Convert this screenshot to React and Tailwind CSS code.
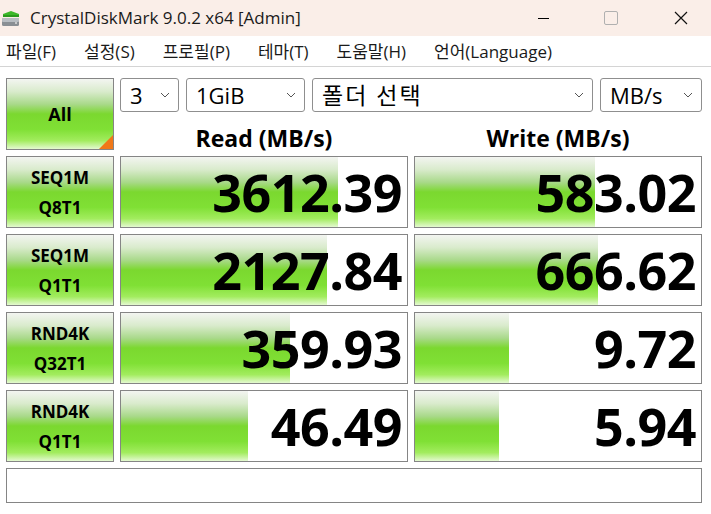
import React from "react";

const rows = [
  { l1: "SEQ1M", l2: "Q8T1", read: "3612.39", rw: 76, write: "583.02", ww: 63 },
  { l1: "SEQ1M", l2: "Q1T1", read: "2127.84", rw: 72, write: "666.62", ww: 64 },
  { l1: "RND4K", l2: "Q32T1", read: "359.93", rw: 59, write: "9.72", ww: 33 },
  { l1: "RND4K", l2: "Q1T1", read: "46.49", rw: 44.5, write: "5.94", ww: 29.5 },
];

const green =
  "bg-[linear-gradient(to_bottom,#f3f5f1_0%,#d9ebcc_18%,#a9d98a_36%,#7bd82f_50%,#80e035_72%,#a2ec5e_88%,#e4f9d0_100%)]";

function Chevron() {
  return (
    <svg width="10" height="6" viewBox="0 0 10 6" className="shrink-0">
      <path d="M1 1l4 4 4-4" fill="none" stroke="#555" strokeWidth="1" />
    </svg>
  );
}

function Select({ w, text, korean }) {
  return (
    <div
      className={`${w} h-[34px] flex items-center justify-between pl-[9px] pr-[8px] border border-[#8f8f8f] rounded-[3px] bg-white`}
    >
      <span className={`${korean ? "text-[23px] tracking-[2px]" : "text-[22px]"} text-black leading-none`}>{text}</span>
      <Chevron />
    </div>
  );
}

function Cell({ value, pct }) {
  return (
    <div className="relative h-[72px] border border-[#858585] bg-white overflow-hidden">
      <div className={`absolute left-0 top-0 bottom-0 ${green}`} style={{ width: `${pct}%` }} />
      <div className="relative h-full flex items-center justify-end pr-[5px] text-[52px] font-bold text-black leading-none tracking-[-0.5px]">
        {value}
      </div>
    </div>
  );
}

export default function App() {
  return (
    <div
      className="w-[711px] h-[514px] bg-white overflow-hidden text-black"
      style={{ fontFamily: '"Open Sans", "Noto Sans CJK KR", sans-serif' }}
    >
      <div className="h-[36px] bg-[#faeee8] flex items-center">
        <svg width="20" height="18" viewBox="0 0 20 18" className="ml-[1px] mr-[9px]">
          <rect x="1" y="9" width="17" height="8" rx="1.5" fill="#8a8f94" />
          <rect x="1" y="9" width="17" height="4" rx="1" fill="#b8bdc2" />
          <circle cx="15" cy="14" r="1" fill="#ddd" />
          <path d="M2 5 L10 2 L18 5 L18 8 L2 8 Z" fill="#3cb82a" />
          <rect x="2" y="6" width="16" height="2" fill="#2a9a1e" />
        </svg>
        <span className="text-[17px] text-[#1a1a1a]">CrystalDiskMark 9.0.2 x64 [Admin]</span>
        <div className="ml-auto flex items-center h-full">
          <div className="w-[46px] flex justify-center">
            <div className="w-[11px] h-px bg-black" />
          </div>
          <div className="w-[46px] ml-[22px] flex justify-center">
            <div className="w-[14px] h-[14px] border border-[#b0b0b0] rounded-[2px]" />
          </div>
          <div className="w-[46px] ml-[24px] mr-[7px] flex justify-center">
            <svg width="14" height="14" viewBox="0 0 14 14">
              <path d="M1 1L13 13M13 1L1 13" stroke="#111" strokeWidth="1.2" />
            </svg>
          </div>
        </div>
      </div>

      <div className="h-[31px] border-b border-[#d4d4d4] flex items-center gap-[28px] pl-[6px] pt-[2px] text-[17px] text-[#1a1a1a]">
        <span>파일(F)</span>
        <span>설정(S)</span>
        <span>프로필(P)</span>
        <span>테마(T)</span>
        <span>도움말(H)</span>
        <span>언어(Language)</span>
      </div>

      <div className="pl-[6px] pt-[11px] w-[702px] grid grid-cols-[108px_288px_288px] gap-[6px]">
        <div className={`relative h-[72px] border border-[#858585] ${green} flex items-center justify-center`}>
          <span className="text-[18px] font-bold">All</span>
          <div className="absolute right-0 bottom-0 w-0 h-0 border-l-[14px] border-l-transparent border-b-[14px] border-b-[#f07818]" />
        </div>
        <div className="col-span-2 h-[72px] flex flex-col">
          <div className="flex gap-[7px]">
            <Select w="w-[59px]" text="3" />
            <Select w="w-[119px]" text="1GiB" />
            <Select w="w-[281px]" text="폴더 선택" korean />
            <Select w="w-[102px]" text="MB/s" />
          </div>
          <div className="grid grid-cols-2 gap-[6px] flex-1">
            <div className="flex items-end justify-center text-[23px] leading-[24px] font-bold">Read (MB/s)</div>
            <div className="flex items-end justify-center text-[23px] leading-[24px] font-bold">Write (MB/s)</div>
          </div>
        </div>

        {rows.map((r) => (
          <React.Fragment key={r.l1 + r.l2}>
            <div className={`h-[72px] border border-[#858585] ${green} flex flex-col items-center justify-center gap-[13px] text-[17px] font-bold leading-none`}>
              <span>{r.l1}</span>
              <span>{r.l2}</span>
            </div>
            <Cell value={r.read} pct={r.rw} />
            <Cell value={r.write} pct={r.ww} />
          </React.Fragment>
        ))}

        <div className="col-span-3 h-[35px] border border-[#858585] bg-white" />
      </div>
    </div>
  );
}
